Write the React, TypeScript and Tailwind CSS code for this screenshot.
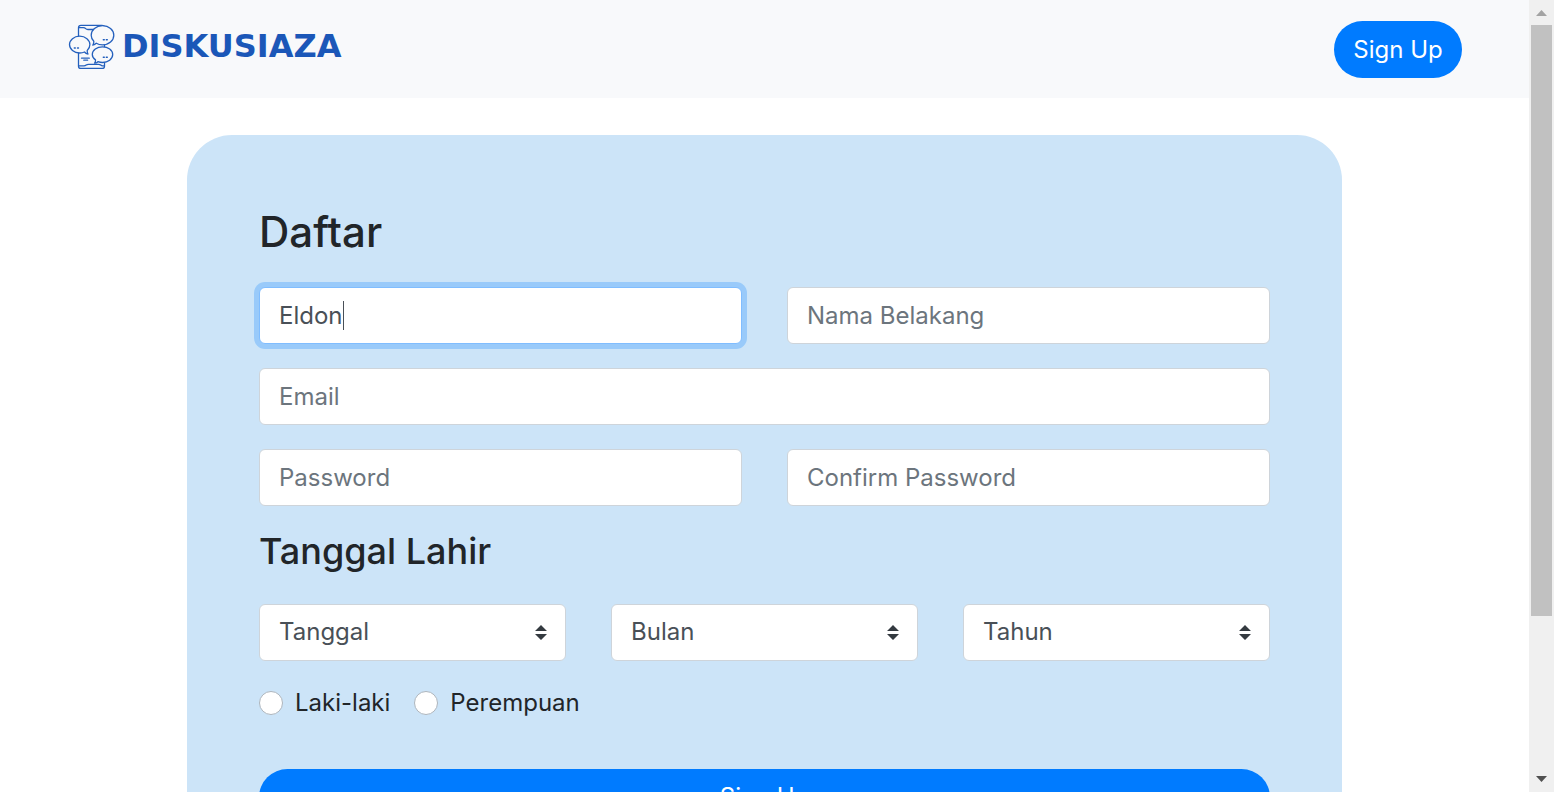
import { useState } from "react";
import type { InputHTMLAttributes, SelectHTMLAttributes } from "react";

function LogoMark() {
  return (
    <svg viewBox="0 0 50 50" className="size-[50px] shrink-0" fill="none" stroke="#2460bd" strokeWidth="1.3" strokeLinejoin="round" strokeLinecap="round" aria-hidden="true">
      <path d="M12.5 15.2V6.8q0-2.4 2.4-2.4h21q2.6 0 2.6 2.2v38.6q0 2.2-2.4 2.2H14.9q-2.4 0-2.4-2.2V32" />
      <path d="M13 6.6h4.4q1.4 0 2.3 1 .8.9 2.2.9h5.6" />
      <path d="M13 44.8h5q1.2 0 2.2-.8.9-.7 2.3-.7h10q1.4 0 2.2.7.8.8 2 .8h1.6" />
      <path d="M15.5 37.2h7.8M17.8 39.2h3.8" />
      <path fill="#f8f9fb" d="M36.5 4.7c6.400 0 11.300 4.100 11.300 9.500s-4.900 9.700-11.300 9.700c-2.400 0-4.500-.6-6.200-1.700-.9 1.100-2 1.700-3.500 1.900.8-1 1.200-2.200 1-3.900-1.700-1.700-2.600-3.800-2.600-6 0-5.400 4.900-9.500 11.300-9.500Z" />
      <path fill="#f8f9fb" d="M13.700 15.200c5.700 0 10.200 3.700 10.200 8.400 0 2.300-1 4.300-2.700 5.800-.1 1.400.1 2.500.8 3.600-1.500-.2-2.600-.9-3.500-2-1.500.7-3 1-4.800 1C8 32 3.500 28.300 3.500 23.600s4.500-8.400 10.200-8.400Z" />
      <path fill="#f8f9fb" d="M36.500 25.800c5.600 0 10.200 3.400 10.200 7.800s-4.600 7.900-10.200 7.900c-1.700 0-3.200-.3-4.600-.8-.9 1-1.900 1.400-3.300 1.500.7-.9 1-1.900.9-3.300-2-1.300-3.200-3.200-3.200-5.300 0-4.400 4.600-7.800 10.200-7.800Z" />
      <path strokeWidth="1.400" d="M8.300 27h1M11.500 27h1M37.300 18.800h1M40.300 18.800h1M37.300 36.300h1M40.300 36.300h1" />
    </svg>
  );
}

function Field({ label, ...rest }: { label: string } & InputHTMLAttributes<HTMLInputElement>) {
  return (
    <input
      aria-label={label}
      placeholder={label}
      className="block h-[57px] w-full min-w-0 rounded-[6px] border border-[#ced4da] bg-white px-[19px] text-[24px] leading-[36px] text-[#495057] outline-none placeholder:text-[#6c757d] focus:border-[#80bdff] focus:ring-[5px] focus:ring-[#007bff]/25"
      {...rest}
    />
  );
}

function Picker({ label, options, ...rest }: { label: string; options: string[] } & SelectHTMLAttributes<HTMLSelectElement>) {
  return (
    <div className="relative">
      <select
        aria-label={label}
        defaultValue=""
        className="block h-[57px] w-full appearance-none rounded-[6px] border border-[#ced4da] bg-white pr-[42px] pb-0.5 pl-[19px] text-[24px] text-[#495057] outline-none focus:border-[#80bdff]"
        {...rest}
      >
        <option value="">{label}</option>
        {options.map((o) => (
          <option key={o}>{o}</option>
        ))}
      </select>
      <svg viewBox="0 0 4 5" className="pointer-events-none absolute top-[21px] right-[19px] h-[15px] w-[12px]" fill="#343a40" aria-hidden="true">
        <path d="M2 0L0 2h4zm0 5L0 3h4z" />
      </svg>
    </div>
  );
}

function Radio({ label }: { label: string }) {
  return (
    <label className="flex items-center gap-3 leading-[36px]">
      <input
        type="radio"
        name="gender"
        className="size-6 appearance-none rounded-full border border-[#adb5bd] bg-white checked:border-[7px] checked:border-[#007bff]"
      />
      {label}
    </label>
  );
}

const days = Array.from({ length: 31 }, (_, i) => String(i + 1));
const months = ["Januari", "Februari", "Maret", "April", "Mei", "Juni", "Juli", "Agustus", "September", "Oktober", "November", "Desember"];
const years = Array.from({ length: 60 }, (_, i) => String(2021 - i));

export default function App() {
  const [first, setFirst] = useState("Eldon");
  return (
    <div className="flex h-screen overflow-hidden bg-white font-['Inter',sans-serif] text-[24px] leading-[36px] text-[#212529]">
      <div className="min-w-0 flex-1 overflow-hidden">
        <header className="flex items-start justify-between bg-[#f8f9fb] pt-[21px] pr-[67px] pb-5 pl-[66px]">
          <a href="#" className="flex items-center gap-1.5">
            <LogoMark />
            <span className="font-['DejaVu_Sans',sans-serif] text-[32px] font-bold text-[#1b57b8]">DISKUSIAZA</span>
          </a>
          <button type="button" className="h-[57px] w-32 rounded-full bg-[#007bff] text-white">
            Sign Up
          </button>
        </header>
        <main className="px-[187px] pt-[37px] pb-9">
          <form className="rounded-[45px] bg-[#cce4f8] p-[72px]" onSubmit={(e) => e.preventDefault()}>
            <h1 className="mb-[30px] text-[42px] leading-[50px] font-medium [font-variant-ligatures:none]">Daftar</h1>
            <div className="grid grid-cols-2 gap-x-[45px] gap-y-6">
              <div className="relative">
                <Field label="Nama Depan" autoFocus value={first} onChange={(e) => setFirst(e.target.value)} style={{ caretColor: "transparent" }} />
                <div className="pointer-events-none absolute inset-y-0 left-5 flex items-center" aria-hidden="true">
                  <span className="invisible">{first}</span>
                  <span className="h-[29px] w-px bg-[#495057]" />
                </div>
              </div>
              <Field label="Nama Belakang" />
              <div className="col-span-2">
                <Field label="Email" type="email" />
              </div>
              <Field label="Password" type="password" />
              <Field label="Confirm Password" type="password" />
            </div>
            <h2 className="mt-6 mb-[31px] text-[36px] leading-[43px] font-medium">Tanggal Lahir</h2>
            <div className="grid grid-cols-3 gap-[45px]">
              <Picker label="Tanggal" options={days} />
              <Picker label="Bulan" options={months} />
              <Picker label="Tahun" options={years} />
            </div>
            <div className="mt-6 flex gap-6">
              <Radio label="Laki-laki" />
              <Radio label="Perempuan" />
            </div>
            <button type="submit" className="mt-12 h-[57px] w-full rounded-full bg-[#007bff] pb-0.5 text-white">
              Sign Up
            </button>
          </form>
        </main>
      </div>
      <div className="flex w-[25px] shrink-0 flex-col items-center bg-[#f0f0f0]" aria-hidden="true">
        <svg viewBox="0 0 25 25" className="size-[25px] shrink-0" fill="#a3a3a3">
          <path d="M7 16h11L12.500 10z" />
        </svg>
        <div className="flex w-[21px] flex-1 flex-col">
          <div className="h-[79.6%] bg-[#c1c1c1]" />
        </div>
        <svg viewBox="0 0 25 25" className="size-[25px] shrink-0" fill="#505050">
          <path d="M7 9h11l-5.500 6z" />
        </svg>
      </div>
    </div>
  );
}
